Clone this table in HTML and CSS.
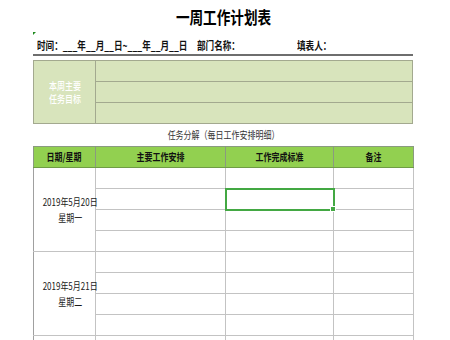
FILE: index.html
```html
<!DOCTYPE html>
<html lang="zh">
<head>
<meta charset="utf-8">
<link rel="stylesheet" href="styles.css">
</head>
<body>
<div class="page">
  <div class="title"><span class="n">一周工作计划表</span></div>
  <div class="info">
    <div class="f-time"><span class="nl">时间：___年__月__日~___年__月__日</span></div>
    <div class="f-dept"><span class="nl">部门名称：</span></div>
    <div class="f-fill"><span class="nl">填表人：</span></div>
  </div>
  <table class="goals">
    <tr><td class="glabel" rowspan="3"><span class="n">本周主要<br>任务目标</span></td><td></td></tr>
    <tr><td></td></tr>
    <tr><td></td></tr>
  </table>
  <div class="sub"><span class="n">任务分解（每日工作安排明细）</span></div>
  <table class="plan">
    <colgroup><col class="c1"><col class="c2"><col class="c3"><col class="c4"></colgroup>
    <tr class="head">
      <th><span class="n">日期/星期</span></th>
      <th><span class="n">主要工作安排</span></th>
      <th><span class="n">工作完成标准</span></th>
      <th><span class="n">备注</span></th>
    </tr>
    <tr><td class="date" rowspan="4"><span class="n">2019年5月20日<br>星期一</span></td><td></td><td></td><td></td></tr>
    <tr><td></td><td class="sel"></td><td></td></tr>
    <tr><td></td><td></td><td></td></tr>
    <tr><td></td><td></td><td></td></tr>
    <tr><td class="date" rowspan="4"><span class="n">2019年5月21日<br>星期二</span></td><td></td><td></td><td></td></tr>
    <tr><td></td><td></td><td></td></tr>
    <tr><td></td><td></td><td></td></tr>
    <tr><td></td><td></td><td></td></tr>
    <tr><td class="date"></td><td></td><td></td><td></td></tr>
  </table>
</div>
</body>
</html>
```
FILE: styles.css
```css
html, body {
  margin: 0;
  padding: 0;
  overflow: hidden;
  background: #fff;
}
body {
  font-family: "Noto Sans CJK SC", "Liberation Sans", sans-serif;
  color: #222;
}
.page {
  width: 380px;
  margin-left: 33px;
}
.n {
  display: inline-block;
  transform: scaleX(0.76);
  transform-origin: center;
  white-space: nowrap;
}
.nl {
  display: inline-block;
  transform: scaleX(0.78);
  transform-origin: left center;
  white-space: nowrap;
}
.title {
  height: 34px;
  line-height: 34px;
  text-align: center;
  font-size: 17px;
  font-weight: bold;
  color: #000;
}
.title .n {
  transform: scaleX(0.8);
}
.info {
  position: relative;
  height: 20px;
  display: flex;
  align-items: flex-end;
  font-size: 11px;
  font-weight: bold;
  color: #111;
  border-bottom: 2px solid #6e6e6e;
  line-height: 18px;
}
.info::before {
  content: "";
  position: absolute;
  left: 0;
  top: -2px;
  width: 0;
  height: 0;
  border-top: 3px solid #1e8a1e;
  border-right: 3px solid transparent;
}
.f-time { width: 160px; flex-shrink: 0; padding-left: 4px; }
.f-dept { width: 100px; flex-shrink: 0; }
.f-fill { flex-shrink: 0; }
table {
  border-collapse: collapse;
  width: 380px;
  table-layout: fixed;
}
td, th {
  padding: 0;
  height: 20px;
}
.goals {
  margin-top: 4px;
  background: #d8e4bc;
  border: 1px solid #9a9a9a;
}
.goals td {
  border: 1px solid #a3a98f;
}
.goals .glabel {
  width: 61px;
  text-align: center;
  vertical-align: middle;
  color: #fff;
  font-size: 10.5px;
  font-weight: 500;
  line-height: 13.5px;
}
.sub {
  height: 22px;
  line-height: 22px;
  text-align: center;
  font-size: 10.5px;
  color: #333;
}
.plan {
  border: 1px solid #a0a0a0;
}
.c1 { width: 62px; }
.c2 { width: 130px; }
.c3 { width: 108px; }
.c4 { width: 80px; }
.plan td {
  border: 1px solid #c3c3c3;
}
.plan .head th {
  background: #92d050;
  font-size: 10.5px;
  font-weight: bold;
  color: #111;
  border: 1px solid #8a9a80;
  border-bottom: 1px solid #6f9c45;
  line-height: 20px;
}
.plan .date {
  text-align: center;
  vertical-align: middle;
  font-size: 10.5px;
  line-height: 16px;
  color: #1a1a1a;
  border-left: 1px solid #a0a0a0;
}
.plan .sel {
  position: relative;
  outline: 2px solid #43a843;
  outline-offset: -1px;
}
.plan .sel::after {
  content: "";
  position: absolute;
  right: -3px;
  bottom: -3px;
  width: 4px;
  height: 4px;
  background: #43a843;
  border: 1px solid #fff;
}
```
